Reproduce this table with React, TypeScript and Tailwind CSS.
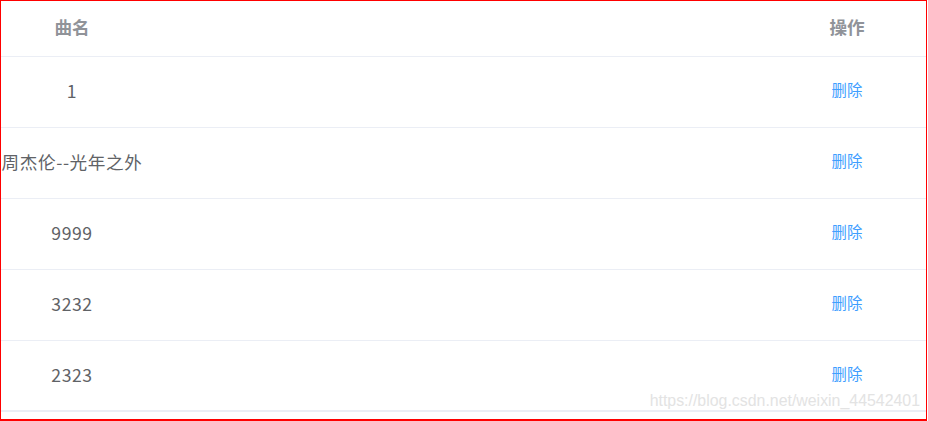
const SONGS = ["1", "周杰伦--光年之外", "9999", "3232", "2323"];

export default function App() {
  return (
    <div
      className="relative w-[927px] h-[421px] border border-b-2 border-[#ff0000] bg-white"
      style={{ fontFamily: '"Microsoft YaHei", "Noto Sans CJK SC", "Liberation Sans", sans-serif' }}
    >
      {/* header */}
      <div className="flex h-[56px] items-center pb-[4px] border-b border-[#ebeef5] text-[17.6px] leading-none font-bold text-[#909399]">
        <div className="w-[142px] text-center">曲名</div>
        <div className="flex-1" />
        <div className="w-[158px] text-center">操作</div>
      </div>

      {SONGS.map((name, i) => (
        <div
          key={i}
          className={`flex h-[71px] items-center border-[#ebeef5] ${
            i === SONGS.length - 1 ? "border-b-2" : "border-b"
          }`}
        >
          <div className="w-[142px] flex justify-center pb-[2px] whitespace-nowrap text-[17.6px] leading-none text-[#606266]">
            <span className="tracking-[0.6px]">{name}</span>
          </div>
          <div className="flex-1" />
          <div className="w-[158px] pb-[5px] text-center leading-none">
            <button className="text-[15.4px] leading-none text-[#409eff]">删除</button>
          </div>
        </div>
      ))}

      {/* watermark */}
      <div
        className="absolute right-[6px] top-[392px] text-[15.9px] leading-none text-[#e3e3e3]"
        style={{ fontFamily: '"Liberation Sans", Arial, sans-serif' }}
      >
        https://blog.csdn.net/weixin_44542401
      </div>
    </div>
  );
}
